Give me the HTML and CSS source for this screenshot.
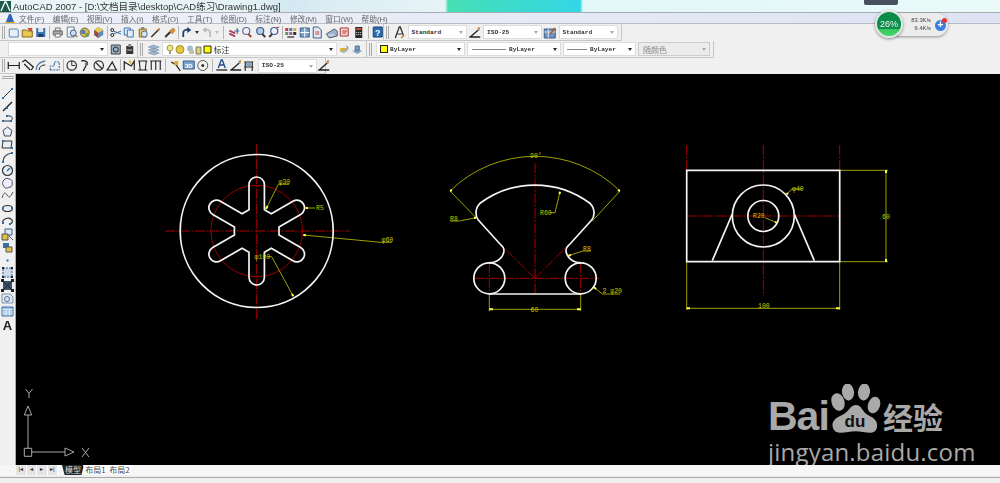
FILE: index.html
```html
<!DOCTYPE html>
<html lang="zh">
<head>
<meta charset="utf-8">
<title>AutoCAD 2007</title>
<link rel="stylesheet" href="styles.css">
</head>
<body>
<div class="app">
  <header class="titlebar">
    <svg class="appicon" viewBox="0 0 11 11"><rect width="11" height="11" fill="#1c5a4a"/><path d="M1 10 5 1h1l4 9" fill="none" stroke="#fff" stroke-width="1.3"/></svg>
    <span class="title">AutoCAD 2007 - [D:\文档目录\desktop\CAD练习\Drawing1.dwg]</span>
  </header>
  <nav class="menubar">
    <svg class="menuicon" viewBox="0 0 10 10"><path d="M1 9h8L6 1H4z" fill="#2f63b5"/><path d="M0 9h10v1H0z" fill="#e0b020"/></svg>
    <span>文件(F)</span><span>编辑(E)</span><span>视图(V)</span><span>插入(I)</span><span>格式(O)</span><span>工具(T)</span><span>绘图(D)</span><span>标注(N)</span><span>修改(M)</span><span>窗口(W)</span><span>帮助(H)</span>
  </nav>

  <div class="row row1">
    <div class="bar">
      <i class="grip"></i>
      <svg class="ic" viewBox="0 0 13 13"><path d="M2 3h8l1 1v7H2z" fill="#e6eef8" stroke="#5f86b0"/></svg>
      <svg class="ic" viewBox="0 0 13 13"><path d="M1 4h4l1 1h5v6H1z" fill="#e8c850" stroke="#8a6a20"/><path d="M6 2h5v3H8z" fill="#c9503a"/></svg>
      <svg class="ic" viewBox="0 0 13 13"><path d="M2 2h9v9H2z" fill="#3c72b0"/><path d="M4 2h5v4H4z" fill="#dfe8f4"/><path d="M4 8h5v3H4z" fill="#20406c"/></svg>
      <i class="sep"></i>
      <svg class="ic" viewBox="0 0 13 13"><path d="M4 2h5v3H4z" fill="#eee" stroke="#777"/><path d="M2 5h9v4H2z" fill="#aaa" stroke="#666"/><path d="M4 8h5v3H4z" fill="#fff" stroke="#777"/></svg>
      <svg class="ic" viewBox="0 0 13 13"><path d="M2 1h7v10H2z" fill="#f4f4f4" stroke="#6a7f9a"/><circle cx="8" cy="7" r="3" fill="#cfe0ef" stroke="#39608c"/><path d="m10 9 2 2" stroke="#a07020" stroke-width="1.5"/></svg>
      <svg class="ic" viewBox="0 0 13 13"><circle cx="6.500" cy="6.500" r="4.500" fill="#e3b93f" stroke="#666"/><path d="M3 4h4v4H3z" fill="#4f7fb5"/><circle cx="9" cy="9" r="2" fill="#7a9a50"/></svg>
      <svg class="ic" viewBox="0 0 13 13"><path d="M6 1 11 4v5l-5 3-4-3V4z" fill="#5f8fc0"/><path d="M6 1 11 4 6 7 2 4z" fill="#e8c850"/><path d="M6 7v5l-4-3V4z" fill="#a04a30"/></svg>
      <i class="sep"></i>
      <svg class="ic" viewBox="0 0 13 13"><circle cx="3" cy="4" r="1.500" fill="none" stroke="#222"/><circle cx="3" cy="9" r="1.500" fill="none" stroke="#222"/><path d="M4 5l8 3M4 8l8-3" stroke="#3c6ea8"/></svg>
      <svg class="ic" viewBox="0 0 13 13"><path d="M2 2h6v7H2z" fill="#e6eef8" stroke="#3f74b0"/><path d="M5 4h6v7H5z" fill="#e6eef8" stroke="#3f74b0"/></svg>
      <svg class="ic" viewBox="0 0 13 13"><path d="M3 3h7v8H3z" fill="#e8c850" stroke="#8a6a20"/><path d="M5 1h3v3H5z" fill="#888"/><circle cx="8" cy="8" r="3" fill="#d6e4f2" stroke="#4a76a8"/></svg>
      <svg class="ic" viewBox="0 0 13 13"><path d="m2 11 7-7" stroke="#333" stroke-width="1.600"/><path d="m8 3 2-1 1 1-1 2z" fill="#d08030"/></svg>
      <svg class="ic" viewBox="0 0 13 13"><path d="m2 11 5-5" stroke="#333" stroke-width="2"/><path d="m6 5 4-3 2 2-3 4z" fill="#e09030" stroke="#a06020" stroke-width=".5"/></svg>
      <i class="sep"></i>
      <svg class="ic" viewBox="0 0 13 13"><path d="M3 11V7c0-3 3-4 6-3" fill="none" stroke="#1c3f70" stroke-width="1.800"/><path d="M7 1l4 3-4 3z" fill="#1c3f70"/></svg>
      <i class="dd"></i>
      <svg class="ic" viewBox="0 0 13 13"><path d="M10 11V7c0-3-3-4-6-3" fill="none" stroke="#bbb" stroke-width="1.800"/><path d="M6 1 2 4l4 3z" fill="#bbb"/></svg>
      <i class="dd pale"></i>
      <i class="sep wide"></i>
      <svg class="ic" viewBox="0 0 13 13"><path d="M2 5c3 0 3 2 6 2M2 8c3 0 3 2 6 2" stroke="#b04060" stroke-width="2" fill="none"/><path d="M10 2v6M7 5h5" stroke="#2a5a98"/></svg>
      <svg class="ic" viewBox="0 0 13 13"><circle cx="6" cy="5" r="3.500" fill="#eef" stroke="#5a6f8f" stroke-width="1.200"/><path d="m8 8 3 3" stroke="#a04030" stroke-width="1.800"/></svg>
      <svg class="ic" viewBox="0 0 13 13"><circle cx="6" cy="5" r="3.500" fill="#b8cde2" stroke="#3a5f8a" stroke-width="1.200"/><path d="m8 8 3 3" stroke="#333" stroke-width="1.800"/></svg>
      <svg class="ic" viewBox="0 0 13 13"><circle cx="7" cy="5" r="3.500" fill="#eef" stroke="#3a5f8a" stroke-width="1.200"/><path d="M5 8 2 11" stroke="#333" stroke-width="1.800"/><path d="M9 2l3-1" stroke="#b04030"/></svg>
      <i class="sep"></i>
      <svg class="ic" viewBox="0 0 13 13"><path d="M1 2h3v3H1z" fill="#c04040"/><path d="M5 2h3v3H5z" fill="#4a7fb5"/><path d="M9 2h3v3H9z" fill="#d0b040"/><path d="M1 6h3v3H1z" fill="#5a9a60"/><path d="M5 6h3v3H5z" fill="#a060a0"/><path d="M9 6h3v3H9z" fill="#333"/><path d="M3 10h7v2H3z" fill="#777"/></svg>
      <svg class="ic" viewBox="0 0 13 13"><path d="M2 2h9v9H2z" fill="#7ea3c9" stroke="#3a5f8a"/><path d="M2 6.500h9M6.500 2v9" stroke="#fff"/></svg>
      <svg class="ic" viewBox="0 0 13 13"><path d="M2 1h5l3 3v8H2z" fill="#e4eaf2" stroke="#3a5f8a"/><path d="M4 6h4M4 8h4" stroke="#c04040"/></svg>
      <svg class="ic" viewBox="0 0 13 13"><path d="M1 8 9 3l3 2v5l-8 2z" fill="#9ab3cc" stroke="#567"/><path d="M3 9h6" stroke="#eee"/></svg>
      <svg class="ic" viewBox="0 0 13 13"><path d="M2 2h8v8H2z" fill="#f3dada" stroke="#b03030"/><path d="M4 5h5M4 7h4" stroke="#b03030"/></svg>
      <svg class="ic" viewBox="0 0 13 13"><path d="M3 1h7v11H3z" fill="#2a2a2a"/><path d="M4 2h5v2H4z" fill="#c9503a"/><path d="M4 6h1v1H4zM6 6h1v1H6zM8 6h1v1H8zM4 8h1v1H4zM6 8h1v1H6zM8 8h1v1H8z" fill="#ddd"/></svg>
      <i class="sep wide"></i>
      <svg class="ic" viewBox="0 0 13 13"><path d="M2 1h9v10H2z" fill="#2d6fb3" stroke="#17406f"/><text x="6.500" y="9.500" class="help">?</text></svg>
    </div>
    <div class="bar">
      <i class="grip"></i>
      <svg class="ic" viewBox="0 0 13 13"><path d="M2 12 6 1h1l3 8" fill="none" stroke="#333" stroke-width="1.300"/><path d="M4 8h5" stroke="#333"/><path d="m8 12 3-3" stroke="#c08030" stroke-width="1.500"/></svg>
      <span class="combo style"><b>Standard</b></span>
      <svg class="ic tight" viewBox="0 0 13 13"><path d="M1 11h11M2 11 10 4" stroke="#222" stroke-width="1.300"/><path d="m9 2 3-1-1 4z" fill="#c08030"/></svg>
      <span class="combo style"><b>ISO-25</b></span>
      <svg class="ic tight" viewBox="0 0 13 13"><path d="M1 3h11v9H1z" fill="#6c94bf" stroke="#3a5f8a"/><path d="M1 6h11M5 3v9" stroke="#dde"/><path d="m7 8 5-6" stroke="#b06020" stroke-width="1.500"/></svg>
      <span class="combo style"><b>Standard</b></span>
    </div>
  </div>

  <div class="row row2">
    <div class="bar">
      <span class="combo workspace"><b></b></span>
      <svg class="ic" viewBox="0 0 13 13"><path d="M2 2h9v9H2z" fill="#9db2c6" stroke="#444"/><circle cx="6.500" cy="6.500" r="2.500" fill="none" stroke="#222"/></svg>
      <svg class="ic" viewBox="0 0 13 13"><path d="M3 3h7v8H3z" fill="#333"/><path d="M5 1h3v3H5z" fill="#888"/><path d="M4 7h5" stroke="#ccc"/></svg>
    </div>
    <div class="bar">
      <i class="grip"></i>
      <svg class="ic" viewBox="0 0 13 13"><path d="M1 4 6 2l6 2-5 2zM1 7l5-2 6 2-5 2zM1 10l5-2 6 2-5 2z" fill="#9fb6cc" stroke="#6d87a0" stroke-width=".5"/></svg>
      <span class="combo layer">
        <svg class="lay" viewBox="0 0 47 11"><circle cx="5" cy="4" r="3" fill="#f2e28a" stroke="#b09a30"/><path d="M4 7h2v3H4z" fill="#999"/><circle cx="15" cy="5.500" r="4" fill="#e8c83c" stroke="#9a8a30"/><circle cx="25" cy="4.500" r="3" fill="#a8bccd"/><path d="M24 6h5v4h-5z" fill="#c2c2a0"/><path d="M31 3h5v7h-5z" fill="#d9d27a" stroke="#776"/><path d="M39 2h7v7h-7z" fill="#ff0" stroke="#222"/></svg>
        <em>标注</em>
      </span>
      <svg class="ic" viewBox="0 0 13 13"><path d="M2 8 6 6l5 2-5 2z" fill="#9fb6cc"/><path d="M3 5h6v3H3z" fill="#d8b030"/><path d="m9 3 2 2-2 2" fill="none" stroke="#3a6ea5"/></svg>
      <svg class="ic" viewBox="0 0 13 13"><path d="M2 8 7 6l5 2-5 3z" fill="#7f9fc0"/><path d="M5 3h4v4H5z" fill="#7f9fc0" stroke="#4a6f98"/></svg>
    </div>
    <div class="bar">
      <i class="grip"></i>
      <span class="combo color"><u class="swatch"></u><b>ByLayer</b></span>
      <span class="combo linetype"><u class="ln"></u><b>ByLayer</b></span>
      <span class="combo weight"><u class="ln"></u><b>ByLayer</b></span>
      <span class="combo plot"><em>随颜色</em></span>
    </div>
  </div>

  <div class="row row3">
    <div class="bar">
      <i class="grip"></i>
      <svg class="ic" viewBox="0 0 13 13"><path d="M1 3v7M12 3v7M1 6.500h11" stroke="#222" stroke-width="1.200"/></svg>
      <svg class="ic" viewBox="0 0 13 13"><path d="m1 3 3-2 8 7-2 3M3 5l6 6" stroke="#222" fill="none" stroke-width="1.200"/></svg>
      <svg class="ic" viewBox="0 0 13 13"><path d="M2 11c0-5 3-8 9-9" stroke="#5a7fa8" fill="none" stroke-width="1.400"/><path d="M5 11c0-3 2-5 6-5" stroke="#222" fill="none"/></svg>
      <svg class="ic" viewBox="0 0 13 13"><path d="M2 11h9M2 11V7h4V3h5v8" fill="none" stroke="#2f5f98" stroke-dasharray="2 1"/></svg>
      <i class="sep"></i>
      <svg class="ic" viewBox="0 0 13 13"><circle cx="6.500" cy="6.500" r="4.700" fill="none" stroke="#333" stroke-width="1.200"/><path d="M6.500 6.500V2M6.500 6.500H10" stroke="#333"/></svg>
      <svg class="ic" viewBox="0 0 13 13"><path d="M3 2c4-1 7 1 6 4M8 6l-3 6" fill="none" stroke="#222" stroke-width="1.300"/><circle cx="8" cy="5" r="1.500" fill="#777"/></svg>
      <svg class="ic" viewBox="0 0 13 13"><circle cx="6.500" cy="6.500" r="4.700" fill="none" stroke="#333" stroke-width="1.200"/><path d="m3 3 7 7" stroke="#333" stroke-width="1.200"/></svg>
      <svg class="ic" viewBox="0 0 13 13"><path d="M2 11h9L7 3 2 11zM1 11h11" fill="none" stroke="#222" stroke-width="1.200"/></svg>
      <i class="sep"></i>
      <svg class="ic" viewBox="0 0 13 13"><path d="M2 2v9M2 3l7 4 3-5v9" fill="none" stroke="#222" stroke-width="1.200"/><path d="m6 2 2 3 2-1-2-3z" fill="#e0c030"/></svg>
      <svg class="ic" viewBox="0 0 13 13"><path d="M2 2h9M2 11h9M3 2l1 9M10 2 9 11" fill="none" stroke="#222" stroke-width="1.100"/></svg>
      <svg class="ic" viewBox="0 0 13 13"><path d="M1 2h11M2 2v9M6.500 2v9M11 2v9" fill="none" stroke="#222" stroke-width="1.100"/></svg>
      <i class="sep wide"></i>
      <svg class="ic" viewBox="0 0 13 13"><path d="m2 3 5 3 4 6" fill="none" stroke="#222" stroke-width="1.300"/><path d="M5 2h4v4H5z" fill="#d8b030"/></svg>
      <svg class="ic" viewBox="0 0 13 13"><path d="M1 2h11v8H1z" fill="#7ea3c9" stroke="#3a5f8a"/><text x="6.500" y="8.500" class="glyph">3D</text></svg>
      <svg class="ic" viewBox="0 0 13 13"><circle cx="6.500" cy="6.500" r="5" fill="#f4f4f4" stroke="#555"/><circle cx="6.500" cy="6.500" r="1.500" fill="#333"/></svg>
      <i class="sep wide"></i>
      <svg class="ic" viewBox="0 0 13 13"><path d="M3 9 6 1h1l3 8M4 6h5" fill="none" stroke="#1d4c8a" stroke-width="1.300"/><path d="M1 11h11" stroke="#222" stroke-width="1.300"/></svg>
      <svg class="ic" viewBox="0 0 13 13"><path d="M1 11h11M2 11 10 4" stroke="#222" stroke-width="1.300"/><path d="m9 2 3-1-1 4z" fill="#c08030"/></svg>
      <svg class="ic" viewBox="0 0 13 13"><path d="M2 3h9M3 3v9M10 3v9M2 8h9" stroke="#222" fill="none" stroke-width="1.100"/><path d="M4 4h5v3H4z" fill="#7ea3c9"/></svg>
      <span class="combo dim"><b>ISO-25</b></span>
      <svg class="ic" viewBox="0 0 13 13"><path d="M1 11h11M2 11 10 4" stroke="#222" stroke-width="1.300"/><path d="m9 2 3-1-1 4z" fill="#c08030"/></svg>
    </div>
  </div>

  <div class="work">
    <aside class="draw-tools">
      <i class="grip-h"></i>
      <svg class="tool" viewBox="0 0 13 13"><path d="m2 11 9-9" stroke="#333"/><path d="M1 10h2v2H1zM10 1h2v2h-2z" fill="#2f6fb0"/></svg>
      <svg class="tool" viewBox="0 0 13 13"><path d="m2 11 9-9" stroke="#222" stroke-width="1.400"/><path d="M5 7h2v2H5z" fill="#2f6fb0"/></svg>
      <svg class="tool" viewBox="0 0 13 13"><path d="M2 9h7c3 0 3-5 0-5H6" fill="none" stroke="#333"/><path d="M1 8h2v2H1zM9 8h2v2H9zM5 3h2v2H5z" fill="#2f6fb0"/></svg>
      <svg class="tool" viewBox="0 0 13 13"><path d="M6.500 2 11 5.500 9.500 11h-6L2 5.500z" fill="#e6eef6" stroke="#445"/></svg>
      <svg class="tool" viewBox="0 0 13 13"><path d="M2 3h9l-1 7H1z" fill="#e6eef6" stroke="#333"/><path d="M1 2h2v2H1zM10 9h2v2h-2z" fill="#2f6fb0"/></svg>
      <svg class="tool" viewBox="0 0 13 13"><path d="M2 11c0-5 3-8 9-9" fill="none" stroke="#333" stroke-width="1.200"/><path d="M1 10h2v2H1zM10 1h2v2h-2z" fill="#2f6fb0"/></svg>
      <svg class="tool" viewBox="0 0 13 13"><circle cx="6.500" cy="6.500" r="5" fill="#e6eef6" stroke="#333" stroke-width="1.200"/><path d="m6 7 3-3" stroke="#2f6fb0" stroke-width="1.500"/></svg>
      <svg class="tool" viewBox="0 0 13 13"><path d="M3 3c1-2 4-2 5-1 2 0 4 2 3 4 1 2-1 5-3 4-2 2-5 1-5-1-2-1-2-4 0-6z" fill="#eef" stroke="#445"/></svg>
      <svg class="tool" viewBox="0 0 13 13"><path d="M1 9c2-6 3-6 5-3s3 3 6-3" fill="none" stroke="#555"/></svg>
      <svg class="tool" viewBox="0 0 13 13"><ellipse cx="6.500" cy="6.500" rx="5" ry="3" fill="#e6eef6" stroke="#333" stroke-width="1.200"/><path d="M1 5h2v2H1zM10 5h2v2h-2z" fill="#2f6fb0"/></svg>
      <svg class="tool" viewBox="0 0 13 13"><path d="M2 8C1 4 8 1 11 5c1 2 0 3-2 4" fill="none" stroke="#333" stroke-width="1.200"/><path d="M1 7h2v2H1zM8 8h2v2H8z" fill="#2f6fb0"/></svg>
      <svg class="tool" viewBox="0 0 13 13"><path d="M4 1h7v6H4z" fill="#dfe8f2" stroke="#3a5f8a"/><path d="M1 6h6v6H1z" fill="#e0c040" stroke="#555"/><path d="M8 8l4 4" stroke="#555"/></svg>
      <svg class="tool" viewBox="0 0 13 13"><path d="M2 2h6v5H2z" fill="#3a6ea5"/><path d="M5 6h6v5H5z" fill="#e0c040" stroke="#555"/></svg>
      <svg class="tool" viewBox="0 0 13 13"><path d="M5.500 5.500h2v2h-2z" fill="#2f6fb0"/></svg>
      <svg class="tool" viewBox="0 0 13 13"><path d="M2 2h9v9H2z" fill="#cfdbe8" stroke="#2f5f98" stroke-dasharray="2 1"/><path d="M1 1h2v2H1zM10 1h2v2h-2zM1 10h2v2H1zM10 10h2v2h-2z" fill="#224"/></svg>
      <svg class="tool" viewBox="0 0 13 13"><path d="M2 2h9v9H2z" fill="#3a5070"/><path d="m2 2 9 9M11 2l-9 9" stroke="#222"/><path d="M0 0h3v3H0zM10 0h3v3h-3zM0 10h3v3H0zM10 10h3v3h-3z" fill="#222"/></svg>
      <svg class="tool" viewBox="0 0 13 13"><path d="M1 2h8l3 3v6H1z" fill="#dfe8f2" stroke="#7a93ad"/><circle cx="6" cy="7" r="2.500" fill="none" stroke="#4a6f98"/></svg>
      <svg class="tool" viewBox="0 0 13 13"><path d="M1 2h11v9H1z" fill="#9ec0e4" stroke="#3a6ea5"/><path d="M1 4.500h11M1 7h11M1 9h11M5 4.500V11M8.500 4.500V11" stroke="#fff" stroke-width=".6"/></svg>
      <svg class="tool" viewBox="0 0 13 13"><text x="6.500" y="11.500" class="atext">A</text></svg>
    </aside>

    <main class="canvas">
      <svg class="drawing" viewBox="16 74 984 391" aria-label="CAD drawing">
        <g class="center">
          <path d="M165 231H350M256.700 144V320.600"/>
          <path d="M474.300 278.300H599.300M535 163.300V293.300M489.300 263V294M580.700 263V294M535 278.300 500 244M535 278.300 569.300 244"/>
          <path d="M686.700 145V170M839.700 145V170M763.300 145V295.700M687 216H839"/>
        </g>
        <circle class="redc" cx="256.700" cy="231" r="45.800"/>

        <g class="dimline">
          <path d="M266 209 278.300 184.300H289M305.700 208H315M303.300 235 380.700 242.300H391.700M293.300 296.300 271.700 256.700H267.300"/>
          <path d="M450 191A121.500 121.500 0 0 1 620 191M450 191 476 217.700M620 191 592.300 221"/>
          <path d="M489.300 294V311M580.700 294V311M489.300 309.300H580.700M555 212.700 560 191.700M555 212.700H550M459.300 221 476 217.700M450 221H459.300M582.700 251 568.300 255.700M582.700 251H591M594 287.300 602.300 294H620"/>
          <path d="M840 170.300H888M840 261.700H888M886 170.300V261.700M686.700 262V310M839.700 262V310M686.700 308.300H839.700M786.700 194.300 791.700 189H802M765 217.700 776.700 222.700"/>
        </g>
        <g class="ticks">
          <path d="M266 209 267.500 206M305.700 208H308M303.300 235 306 235.300M293.300 296.300 292 294M450 191 452 190M620 191 618 190M476 217.700 474 217.900M568.300 255.700 571 255M489.300 309.300H493M580.700 309.300H577M886 170.300V173M886 261.700V259M686.700 308.300H690M839.700 308.300H836M786.700 194.300 788 193M776.700 222.700 775 222M594 287.300 596 289M560 191.700 559.500 194"/>
        </g>

        <g class="solid">
          <circle cx="256.700" cy="231" r="76.500"/>
          <path transform="translate(256.700 231)" d="M-7.700-21.300V-46.300A7.700 7.700 0 0 1 7.700-46.300V-21.300L14.600-17.320 36.250-29.820A7.700 7.700 0 0 1 43.950-16.480L22.300-3.980V3.980L43.950 16.480A7.700 7.700 0 0 1 36.250 29.820L14.600 17.320 7.700 21.300V46.300A7.700 7.700 0 0 1-7.700 46.300V21.300L-14.600 17.320-36.250 29.820A7.700 7.700 0 0 1-43.950 16.480L-22.300 3.980V-3.980L-43.950-16.480A7.700 7.700 0 0 1-36.250-29.820L-14.600-17.320Z"/>
          <circle cx="489.300" cy="278.300" r="15.500"/>
          <circle cx="580.700" cy="278.300" r="15.500"/>
          <path d="M489.300 262.700C497 263 504 257 504 250 504 247 502 246 500 244L478.300 220C475 216 475 208 480 203.300A92 92 0 0 1 590 203.300C595 208 595 216 591.700 220L570 244C568 246 566 247 566 250 566 257 573 263 580.700 262.700M489.300 294H580.700"/>
          <path d="M686.700 170.300H839.700V261.700H686.700Z"/>
          <circle cx="763.300" cy="216" r="31"/>
          <circle cx="763.300" cy="216" r="15.500"/>
          <path d="M732.300 214 712.300 260.700M794.300 214 814.300 260.700"/>
        </g>

        <g class="dimtext">
          <text x="278.500" y="184">φ30</text>
          <text x="316" y="210">R5</text>
          <text x="381.500" y="242">φ60</text>
          <text x="254.500" y="259">φ100</text>
          <text x="530" y="157.500">90°</text>
          <text x="450" y="221">R8</text>
          <text x="540" y="215">R60</text>
          <text x="583" y="251">R8</text>
          <text x="602.500" y="293">2 φ20</text>
          <text x="530.500" y="311.500" class="onblack">60</text>
          <text x="792" y="190.500">φ40</text>
          <text x="753" y="218">R20</text>
          <text x="882" y="218.500">60</text>
          <text x="758" y="308">100</text>
        </g>

        <g class="ucs">
          <path d="M24.300 448.300H31.700V456.300H24.300ZM28 448.300V415M24.300 415 28 406 31.700 415ZM31.700 452H65M65 448 74 452 65 456Z"/>
          <path d="M25.500 389 29 393.500 32.500 389M29 393.500V398M82 448 89 457M89 448 82 457"/>
        </g>
      </svg>
      <div class="watermark">
        <div class="wm-top">
          <span class="wm-bai">Bai</span>
          <svg class="wm-paw" viewBox="0 0 52 52"><ellipse cx="9" cy="18" rx="6.500" ry="9" transform="rotate(-18 9 18)"/><ellipse cx="19" cy="8" rx="6" ry="8.500" transform="rotate(-8 19 8)"/><ellipse cx="35" cy="8" rx="6" ry="8.500" transform="rotate(8 35 8)"/><ellipse cx="45" cy="21" rx="6" ry="8.500" transform="rotate(18 45 21)"/><path d="M27 21C21 21 20 28 13 31 6 34 2 38 4 44 6 50 13 49 19 48 24 47 29 47 34 48 41 49 47 50 48 43 49 37 45 34 39 31 33 28 33 21 27 21Z"/><text x="26" y="43">du</text></svg>
          <span class="wm-cn">经验</span>
        </div>
        <div class="wm-url">jingyan.baidu.com</div>
      </div>
    </main>
  </div>

  <div class="tabs">
    <span class="nav">|◂</span><span class="nav">◂</span><span class="nav">▸</span><span class="nav">▸|</span>
    <span class="tab active">模型</span><span class="tab">布局1</span><span class="tab">布局2</span>
  </div>
  <div class="statusbar"></div>
</div>

<div class="dock"></div>
<div class="netwidget">
  <div class="ball"><span>26%</span></div>
  <div class="rates">
    <span class="up">83.3K/s</span>
    <span class="down">6.4K/s</span>
  </div>
  <div class="plus">+<i></i></div>
</div>
</body>
</html>
```

FILE: styles.css
```css
* { box-sizing: border-box; }
html, body { margin: 0; height: 100%; }
body {
  width: 1000px;
  height: 483px;
  overflow: hidden;
  position: relative;
  background: #f0f0f0;
  font-family: "Liberation Sans", "Noto Sans CJK SC", sans-serif;
}
i, em, u, b { font-style: normal; text-decoration: none; font-weight: normal; display: block; }

.app { height: 483px; display: flex; flex-direction: column; filter: blur(.35px); }

.titlebar {
  height: 13px;
  display: flex;
  align-items: center;
  gap: 2px;
  border-bottom: 1px solid #a9adad;
  background: linear-gradient(90deg, #e9f5f6 0, #e6f3f6 240px, #d3e8f2 290px, #dcecf4 325px, #e6f4f6 445px, #46dfb4 448px, #33d6e6 580px, #e2f7f8 583px, #eafaf9 1000px);
}
.appicon { width: 11px; height: 11px; flex: none; }
.title { font-size: 9.500px; color: #333; white-space: nowrap; }

.menubar {
  height: 11px;
  display: flex;
  align-items: center;
  gap: 8.500px;
  padding-left: 5px;
  border-bottom: 1px solid #b9bcc6;
  background: linear-gradient(90deg, #eef1fa, #dde3f3);
  font-size: 7.700px;
  color: #666;
  white-space: nowrap;
}
.menuicon { width: 10px; height: 10px; margin-right: -4.500px; flex: none; }

.row { display: flex; align-items: stretch; background: #f0f0f0; }
.row1 { height: 17px; }
.row2 { height: 17px; }
.row3 { height: 16px; }

.bar {
  display: flex;
  align-items: center;
  border-right: 1px solid #c6c6c6;
  border-bottom: 1px solid #c6c6c6;
  padding-right: 3px;
}
.row1 .bar:first-child { width: 384px; }
.row2 .bar:first-child { width: 138px; padding-left: 8px; }
.row2 .bar:nth-child(2) { width: 229px; }
.row3 .bar { width: 326px; }

.grip { width: 3px; height: 13px; margin: 0 4px 0 2px; border-left: 1px solid #aaa; border-right: 1px solid #aaa; flex: none; }
.row1 .bar:first-child .grip, .row3 .bar .grip { margin-right: 2.250px; }
.ic { width: 13.500px; height: 13px; flex: none; }
.ic.tight { margin: 0 1px; }
.sep { width: 1px; height: 13px; margin: 0 1.250px; background: #b5b5b5; flex: none; }
.sep.wide { margin: 0 2.500px; }
.dd { width: 0; height: 0; margin: 0 1.500px; border: 2px solid transparent; border-top: 3px solid #333; border-bottom: 0; flex: none; }
.dd.pale { border-top-color: #bbb; }
.help { font: bold 9px "Liberation Sans", sans-serif; fill: #fff; text-anchor: middle; }
.glyph { font: bold 6px "Liberation Sans", sans-serif; fill: #fff; text-anchor: middle; }
.atext { font: bold 13px "Liberation Sans", sans-serif; fill: #222; text-anchor: middle; }

.combo {
  height: 14px;
  display: flex;
  align-items: center;
  flex: none;
  position: relative;
  background: #fff;
  border: 1px solid #dcdcdc;
  padding: 0 12px 0 3px;
  font: 6.200px "Liberation Mono", monospace;
  color: #333;
}
.combo::after {
  content: "";
  position: absolute;
  right: 3px;
  top: 5px;
  border: 2.500px solid transparent;
  border-top: 3px solid #222;
  border-bottom: 0;
}
.style::after, .dim::after, .plot::after { border-top-color: #aaa; }
.combo b { font-weight: bold; letter-spacing: 0; }
.style { width: 59px; margin-left: 1px; }
.dim { width: 59px; margin: 0 .500px 0 2px; }
.workspace { width: 100px; margin-right: 1px; }
.layer { width: 175px; padding-left: 2px; margin-left: 1px; font: 8px "Noto Sans CJK SC", sans-serif; }
.lay { width: 47px; height: 11px; margin-right: 2px; flex: none; }
.color { width: 89px; margin-left: 0; }
.linetype { width: 94px; margin-left: 2px; }
.weight { width: 73px; margin-left: 2px; }
.plot { width: 72px; margin-left: 2px; background: #ececec; border-color: #ccc; font: 8px "Noto Sans CJK SC", sans-serif; color: #888; padding-left: 4px; }
.swatch { width: 6px; height: 6px; margin-right: 2px; background: #ff0; border: 1px solid #222; flex: none; box-sizing: content-box; }
.ln { width: 34px; height: 1px; margin-right: 3px; background: #888; flex: none; }
.weight .ln { width: 20px; }
.linetype .ln { margin-left: 1px; }
.linetype b { margin-left: 0; }

.work { height: 391px; display: flex; }
.draw-tools {
  width: 16px;
  display: grid;
  grid-auto-rows: 12.830px;
  align-content: start;
  justify-items: center;
  border-right: 1px solid #aaa;
  flex: none;
}
.grip-h { width: 12px; height: 3px; margin-top: 2px; border-top: 1px solid #aaa; border-bottom: 1px solid #aaa; align-self: start; height: 3px; margin-bottom: 4px; }
.tool { width: 13px; height: 13px; }

.canvas { flex: 1; background: #000; position: relative; overflow: hidden; }
.drawing { display: block; width: 984px; height: 391px; }
.drawing path, .drawing circle { fill: none; }
.center path { stroke: #a80000; stroke-width: 1; stroke-dasharray: 10 1.500 2 1.500; }
.redc { stroke: #9a0000; stroke-width: 1; }
.dimline path { stroke: #a0a000; stroke-width: 1; }
.ticks path { stroke: #ffff40; stroke-width: 2; }
.solid circle, .solid path { stroke: #f4f4f4; stroke-width: 1.700; }
.dimtext text { font: 6.500px "Liberation Mono", monospace; fill: #c8c800; }
.ucs path { stroke: #a8a8a8; stroke-width: 1; }

.watermark {
  position: absolute;
  left: 752px;
  top: 301px;
  width: 182px;
  color: #a9a9a9;
}
.wm-top { display: flex; align-items: flex-end; height: 60px; }
.wm-bai { font: bold 41px/41px "Liberation Sans", sans-serif; letter-spacing: -1px; width: 61px; height: 39px; flex: none; }
.wm-paw { width: 52px; height: 52px; flex: none; margin-bottom: -1px; }
.wm-paw ellipse, .wm-paw path { fill: #a9a9a9; }
.wm-paw text { font: bold 17px "Liberation Sans", sans-serif; fill: #111; text-anchor: middle; }
.wm-cn { font: bold 30px/38px "Noto Sans CJK SC", sans-serif; margin-left: 2px; white-space: nowrap; }
.wm-url { font: 24px/24px "Open Sans", sans-serif; margin-top: 5px; white-space: nowrap; letter-spacing: .2px; }

.tabs {
  height: 10px;
  display: flex;
  align-items: stretch;
  padding-left: 16px;
  background: #f6f6f6;
  font-size: 8px;
  color: #444;
}
.nav { width: 10.500px; font-size: 6px; line-height: 9px; text-align: center; background: #e4e4e4; border-right: 1px solid #fff; color: #222; }
.tab { width: 25px; text-align: center; line-height: 10px; background: #fff; clip-path: polygon(0 0, 100% 0, 88% 100%, 12% 100%); margin-right: -1px; font-family: "Noto Sans CJK SC", sans-serif; }
.tab.active { background: #222; color: #ddd; margin-left: 4px; width: 22px; }
.statusbar { flex: 1; margin-top: 2px; border-top: 1px solid #a8a8a8; background: #f0f0f0; }

.dock { position: absolute; left: 864px; top: 0; width: 34px; height: 5px; background: #46505e; border-radius: 0 0 2px 2px; }

.netwidget {
  position: absolute;
  left: 875px;
  top: 10px;
  display: flex;
  align-items: center;
  width: 76px;
  height: 28px;
}
.ball {
  position: absolute;
  left: 0;
  top: 0;
  width: 28px;
  height: 28px;
  border-radius: 50%;
  border: 2px solid #e0e6e2;
  background: linear-gradient(#0a8a48 0, #0e8e4c 72%, #3ccb60 73%, #44d26a 100%);
  box-shadow: 0 1px 3px rgba(0,0,0,.45);
  display: flex;
  align-items: center;
  justify-content: center;
  color: #f2f8f2;
  font-size: 9px;
  z-index: 1;
}
.rates {
  margin-left: 14px;
  width: 59px;
  height: 23px;
  padding: 3px 17px 0 0;
  border-radius: 12px;
  background: #ececec;
  box-shadow: 0 1px 3px rgba(0,0,0,.4);
  display: flex;
  flex-direction: column;
  align-items: flex-end;
  font-size: 5.800px;
  line-height: 8.500px;
  color: #444;
}
.up::before, .down::before { content: ""; }
.plus {
  position: absolute;
  left: 60px;
  top: 10px;
  width: 11px;
  height: 11px;
  border-radius: 50%;
  background: #3b7fdc;
  color: #fff;
  font: bold 10px/10px "Liberation Sans", sans-serif;
  text-align: center;
}
.plus i { position: absolute; right: -1px; top: -2px; width: 5px; height: 5px; border-radius: 50%; background: #e03030; }
```
